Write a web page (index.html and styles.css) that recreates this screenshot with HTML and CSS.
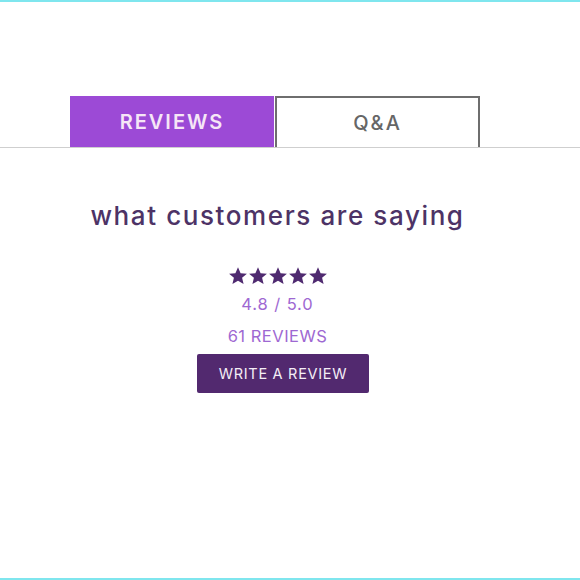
FILE: index.html
```html
<!DOCTYPE html>
<html>
<head>
<meta charset="utf-8">
<link rel="stylesheet" href="styles.css">
</head>
<body>
<div class="frame">
  <div class="tabbar">
    <div class="tab tab-active">REVIEWS</div>
    <div class="tab tab-idle">Q&amp;A</div>
  </div>
  <div class="summary">
    <h2 class="heading">what customers are saying</h2>
    <div class="stars">
      <svg viewBox="0 0 24 24" class="star"><path d="M12 1.5l3.1 7.1 7.6.6-5.8 5 1.8 7.5L12 17.7l-6.7 4 1.8-7.5-5.8-5 7.6-.6z"/></svg>
      <svg viewBox="0 0 24 24" class="star"><path d="M12 1.5l3.1 7.1 7.6.6-5.8 5 1.8 7.5L12 17.7l-6.7 4 1.8-7.5-5.8-5 7.6-.6z"/></svg>
      <svg viewBox="0 0 24 24" class="star"><path d="M12 1.5l3.1 7.1 7.6.6-5.8 5 1.8 7.5L12 17.7l-6.7 4 1.8-7.5-5.8-5 7.6-.6z"/></svg>
      <svg viewBox="0 0 24 24" class="star"><path d="M12 1.5l3.1 7.1 7.6.6-5.8 5 1.8 7.5L12 17.7l-6.7 4 1.8-7.5-5.8-5 7.6-.6z"/></svg>
      <svg viewBox="0 0 24 24" class="star"><path d="M12 1.5l3.1 7.1 7.6.6-5.8 5 1.8 7.5L12 17.7l-6.7 4 1.8-7.5-5.8-5 7.6-.6z"/></svg>
    </div>
    <div class="rating">4.8 / 5.0</div>
    <div class="count">61 REVIEWS</div>
    <div class="write-row"><button class="write">WRITE A REVIEW</button></div>
  </div>
</div>
</body>
</html>
```

FILE: styles.css
```css
html, body {
  margin: 0;
  padding: 0;
  background: #ffffff;
}
.frame {
  box-sizing: border-box;
  width: 580px;
  height: 580px;
  border-top: 2px solid #7fe6ee;
  border-bottom: 2px solid #7fe6ee;
  font-family: "Inter", "Noto Sans", sans-serif;
  padding-top: 94px;
}
.tabbar {
  display: flex;
  padding-left: 70px;
  border-bottom: 1px solid #cfcfcf;
}
.tab {
  box-sizing: border-box;
  height: 51px;
  display: flex;
  align-items: center;
  justify-content: center;
  font-size: 20px;
  letter-spacing: 2px;
}
.tab-active {
  width: 204px;
  background: #9c4ad6;
  color: #f6e6f6;
  font-weight: 600;
}
.tab-idle {
  width: 205px;
  margin-left: 1px;
  border: 2px solid #6e6e6e;
  border-bottom: none;
  color: #666666;
  font-weight: 500;
}
.summary {
  display: flex;
  flex-direction: column;
  align-items: center;
  padding-right: 25px;
}
.heading {
  margin: 52px 0 0;
  font-size: 26px;
  font-weight: 500;
  color: #4d3366;
  letter-spacing: 1.6px;
  line-height: 32px;
}
.stars {
  display: flex;
  gap: 0;
  margin-top: 34px;
}
.star {
  width: 20px;
  height: 20px;
  fill: #4f2a70;
}
.rating {
  margin-top: 7px;
  font-size: 16.5px;
  color: #9e68d2;
  line-height: 22px;
  letter-spacing: 0.9px;
}
.count {
  margin-top: 10px;
  font-size: 16.5px;
  color: #9e68d2;
  line-height: 22px;
  letter-spacing: 0.5px;
}
.write-row {
  margin-top: 7px;
  padding-left: 11px;
}
.write {
  width: 172px;
  height: 39px;
  border: none;
  border-radius: 2px;
  background: #52296f;
  color: #f4eef6;
  font-family: "Inter", "Noto Sans", sans-serif;
  font-size: 14.5px;
  font-weight: 400;
  letter-spacing: 0.7px;
}
```
